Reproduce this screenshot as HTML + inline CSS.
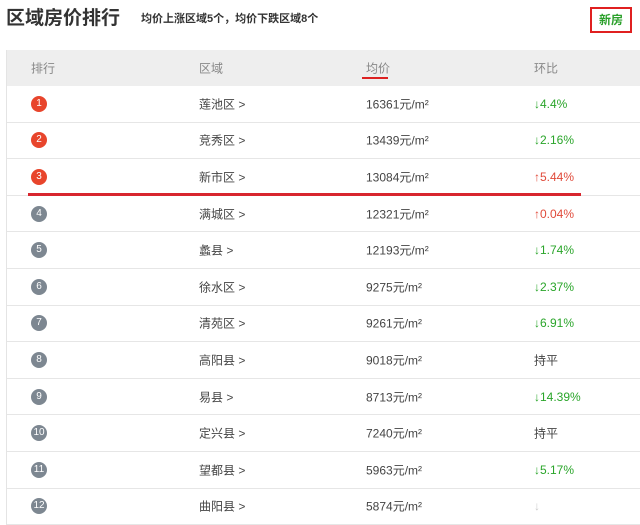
<!DOCTYPE html>
<html><head><meta charset="utf-8"><style>
*{margin:0;padding:0;box-sizing:border-box}
body{width:640px;height:524px;background:#fff;font-family:"Liberation Sans","Noto Sans CJK SC",sans-serif;position:relative;overflow:hidden;color:#444}
.t{position:absolute;left:6px;top:3px;font-size:19px;font-weight:bold;color:#333;letter-spacing:0px}
.s{position:absolute;left:141px;top:10px;font-size:11px;font-weight:bold;color:#333}
.nf{position:absolute;left:590px;top:7px;width:42px;height:26px;border:2px solid #e02020;color:#2ba02b;font-size:12px;font-weight:bold;text-align:center;line-height:22px}
.tb{position:absolute;left:6px;top:50px;width:634px;border-left:1px solid #e4e4e4}
.h{height:36px;background:#eeeeee;position:relative;font-size:12px;color:#888}
.r{height:36.6px;border-bottom:1px solid #e6e6e6;position:relative;font-size:12px;color:#444}
.c{position:absolute;top:50%;transform:translateY(-50%);white-space:nowrap}
.c1{left:24px}.c2{left:192px}.c3{left:359px}.c4{left:527px}
.b{left:24px;width:16px;height:16px;border-radius:50%;color:#fff;font-size:10px;text-align:center;line-height:16px;background:#7d8791}
.red{background:#e8452c}
.g{color:#2aa52a}.rd{color:#e04a3a}
.l1{position:absolute;left:362px;top:77px;width:26px;height:2px;background:#d22}
.l2{position:absolute;left:28px;top:193px;width:553px;height:3px;background:#d8262e}
</style></head><body>
<div class="t">区域房价排行</div>
<div class="s">均价上涨区域5个，均价下跌区域8个</div>
<div class="nf">新房</div>
<div class="tb">
<div class="h"><span class="c c1">排行</span><span class="c c2">区域</span><span class="c c3">均价</span><span class="c c4">环比</span></div>
<div class="r"><span class="c b red">1</span><span class="c c2">莲池区 &gt;</span><span class="c c3">16361元/m²</span><span class="c c4 g">↓4.4%</span></div>
<div class="r"><span class="c b red">2</span><span class="c c2">竞秀区 &gt;</span><span class="c c3">13439元/m²</span><span class="c c4 g">↓2.16%</span></div>
<div class="r"><span class="c b red">3</span><span class="c c2">新市区 &gt;</span><span class="c c3">13084元/m²</span><span class="c c4 rd">↑5.44%</span></div>
<div class="r"><span class="c b">4</span><span class="c c2">满城区 &gt;</span><span class="c c3">12321元/m²</span><span class="c c4 rd">↑0.04%</span></div>
<div class="r"><span class="c b">5</span><span class="c c2">蠡县 &gt;</span><span class="c c3">12193元/m²</span><span class="c c4 g">↓1.74%</span></div>
<div class="r"><span class="c b">6</span><span class="c c2">徐水区 &gt;</span><span class="c c3">9275元/m²</span><span class="c c4 g">↓2.37%</span></div>
<div class="r"><span class="c b">7</span><span class="c c2">清苑区 &gt;</span><span class="c c3">9261元/m²</span><span class="c c4 g">↓6.91%</span></div>
<div class="r"><span class="c b">8</span><span class="c c2">高阳县 &gt;</span><span class="c c3">9018元/m²</span><span class="c c4">持平</span></div>
<div class="r"><span class="c b">9</span><span class="c c2">易县 &gt;</span><span class="c c3">8713元/m²</span><span class="c c4 g">↓14.39%</span></div>
<div class="r"><span class="c b">10</span><span class="c c2">定兴县 &gt;</span><span class="c c3">7240元/m²</span><span class="c c4">持平</span></div>
<div class="r"><span class="c b">11</span><span class="c c2">望都县 &gt;</span><span class="c c3">5963元/m²</span><span class="c c4 g">↓5.17%</span></div>
<div class="r"><span class="c b">12</span><span class="c c2">曲阳县 &gt;</span><span class="c c3">5874元/m²</span><span class="c c4" style="color:#ccc">↓</span></div>
</div>
<div class="l1"></div><div class="l2"></div>
</body></html>
